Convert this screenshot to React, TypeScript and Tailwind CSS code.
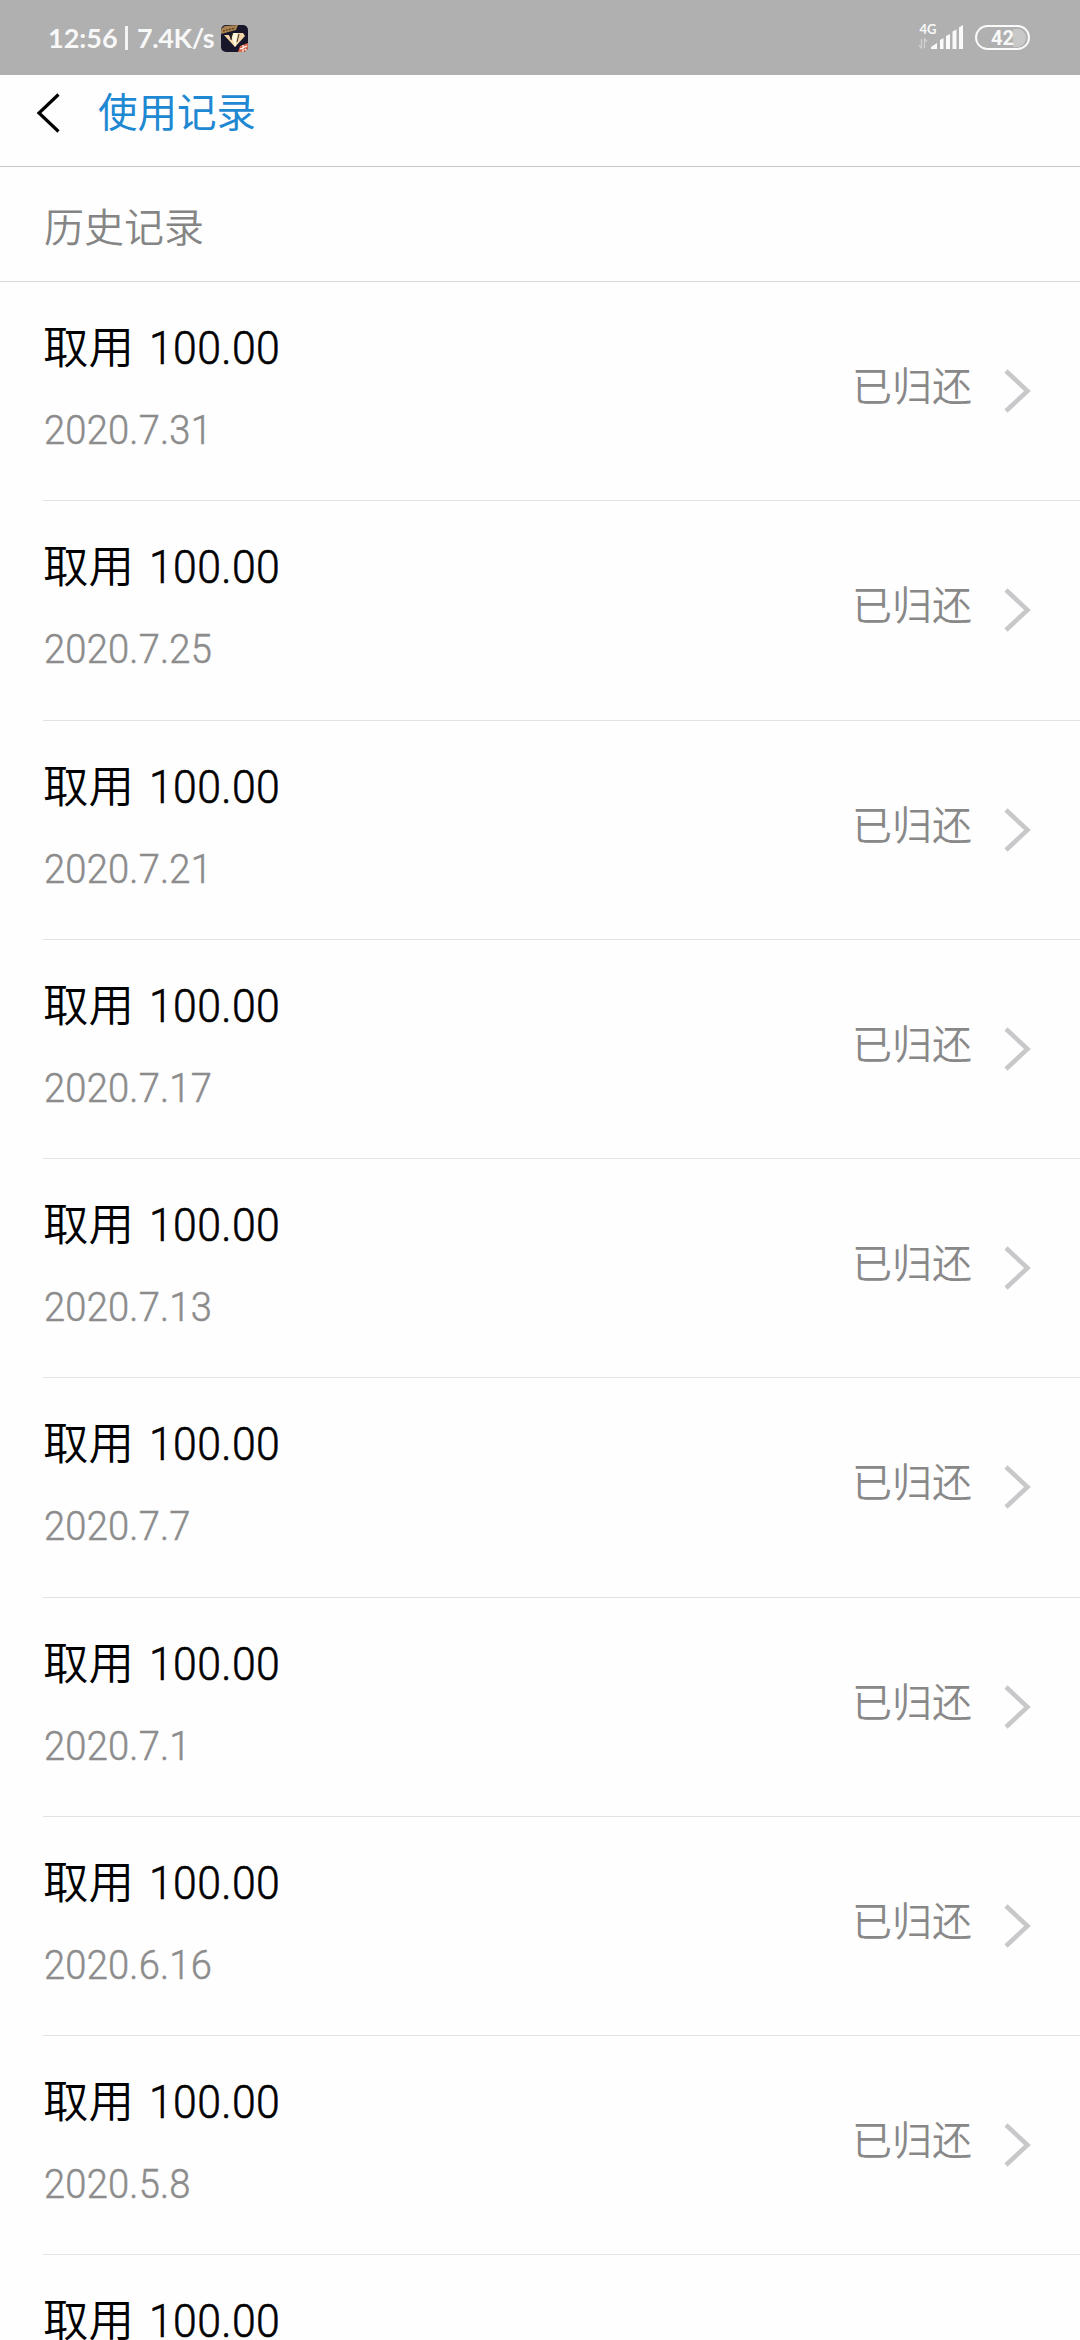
interface HistoryRecord {
  amount: string;
  date?: string;
  status?: string;
}

const RECORDS: HistoryRecord[] = [
  { amount: "100.00", date: "2020.7.31", status: "已归还" },
  { amount: "100.00", date: "2020.7.25", status: "已归还" },
  { amount: "100.00", date: "2020.7.21", status: "已归还" },
  { amount: "100.00", date: "2020.7.17", status: "已归还" },
  { amount: "100.00", date: "2020.7.13", status: "已归还" },
  { amount: "100.00", date: "2020.7.7", status: "已归还" },
  { amount: "100.00", date: "2020.7.1", status: "已归还" },
  { amount: "100.00", date: "2020.6.16", status: "已归还" },
  { amount: "100.00", date: "2020.5.8", status: "已归还" },
  { amount: "100.00" },
];

function AppBadge() {
  return (
    <svg className="ml-[9px] h-[27px] w-[27px]" viewBox="0 0 27 27">
      <clipPath id="badge">
        <rect width="27" height="27" rx="5" />
      </clipPath>
      <g clipPath="url(#badge)">
        <rect width="27" height="27" fill="#17162a" />
        <path d="M0 4L4 1L17 0L15 5L0 9Z" fill="#a9824f" />
        <path d="M2 6L14 3" stroke="#4f3925" strokeWidth="1.2" strokeDasharray="2 1" />
        <path d="M3 10H8L10 15L12 8H18L22 8L24 11L14 22Z" fill="#f3d6a8" />
        <path d="M11 12L13 8H16L15 20L14 22Z" fill="#fffbe0" />
        <path d="M11 9L10 15M18 9L16 17" stroke="#3b2c2c" strokeWidth="1" />
        <path d="M17 27L19 21L27 18V27Z" fill="#d9694f" />
        <path d="M19 24L26 21M22 20V27M24 24L26 26" stroke="#fff" strokeWidth="1.1" />
      </g>
    </svg>
  );
}

function SignalIcon() {
  return (
    <svg className="h-[30px] w-[47px] overflow-visible" viewBox="0 0 47 30">
      <text x="2.5" y="11" fontSize="13" fontWeight="700" fontFamily="Lato, sans-serif" fill="#fafafa">
        4G
      </text>
      <path d="M4.5 16V25L2 22.5M7.5 25V16L10 18.5" fill="none" stroke="#d2d2d2" strokeWidth="1.3" />
      <g fill="#fafafa">
        <path d="M14 26V24L20 20V26Z" />
        <path d="M23 26V17L26.5 15V26Z" />
        <path d="M29 26V13L33 11V26Z" />
        <path d="M35.5 26V8.5L39.5 6.5V26Z" />
        <path d="M42 26V4.5L46 2V26Z" />
      </g>
    </svg>
  );
}

function StatusBar() {
  return (
    <div className="flex h-[75px] items-center justify-between bg-[#b0b0b0] pr-[50px] pl-[48px] text-[#f8f8f8]">
      <div className="flex items-center pt-px font-['Lato',sans-serif] text-[27px] leading-[36px] font-bold">
        <span className="w-[69px] whitespace-nowrap">12:56</span>
        <span className="mr-[9px] ml-[8px] h-[24px] w-[3px] bg-[#f4f4f4]" />
        <span className="w-[75px] tracking-[-0.4px] whitespace-nowrap">7.4K/s</span>
        <AppBadge />
      </div>
      <div className="flex items-center">
        <SignalIcon />
        <div className="ml-[11px] flex h-[25px] w-[55px] items-center justify-center rounded-full border-2 border-[#fafafa] bg-linear-to-r from-[#b0b0b0] from-70% to-[#c8c8c8] to-70% bg-clip-content p-[2px] pb-[1px] font-['Roboto',sans-serif] text-[20px] leading-[21px] font-bold">
          42
        </div>
      </div>
    </div>
  );
}

function RecordRow({ record }: { record: HistoryRecord }) {
  return (
    <li className="ml-[43px] h-[219.25px] border-b border-[#e2e2e2]">
      <div className="flex justify-between pr-[49px]">
        <div className="pt-[32px]">
          <div className="flex items-start text-black">
            <span className="text-[45.5px] leading-[60px] font-[350]">取用</span>
            <span className="ml-[15px] origin-left scale-x-[0.93] pt-[4px] font-['Roboto',sans-serif] text-[46px] leading-[60px] font-light tracking-[0.4px] [-webkit-text-stroke:0.6px]">
              {record.amount}
            </span>
          </div>
          {record.date && (
            <div className="mt-[28px] ml-px origin-left scale-x-[0.93] font-['Roboto',sans-serif] text-[41px] leading-[48px] font-light tracking-[0.2px] text-[#8c8c8c] [-webkit-text-stroke:0.5px]">
              {record.date}
            </div>
          )}
        </div>
        {record.status && (
          <div className="flex pt-[78px]">
            <span className="text-[40px] leading-[48px] font-[350] text-[#888]">{record.status}</span>
            <svg className="mt-[9px] ml-[32px] h-[44px] w-[27px]" viewBox="0 0 27 44" fill="none">
              <path d="M2 2L23.5 22L2 42" stroke="#c8c8ca" strokeWidth="4.5" />
            </svg>
          </div>
        )}
      </div>
    </li>
  );
}

export default function App() {
  return (
    <div className="h-[2340px] w-[1080px] overflow-hidden bg-[#fefefe] font-['Noto_Sans_CJK_SC',sans-serif]">
      <StatusBar />
      <header className="flex h-[92px] items-start border-b border-[#c6c6c6] pl-[36px]">
        <svg className="mt-[18px] h-[40px] w-[25px]" viewBox="0 0 25 40" fill="none">
          <path d="M22.5 1.5L3 20L22.5 38.5" stroke="#000" strokeWidth="3.2" />
        </svg>
        <h1 className="ml-[37px] pt-[7px] text-[39.5px] leading-[56px] text-[#1f88d2]">使用记录</h1>
      </header>
      <h2 className="h-[115px] border-b border-[#d8d8d8] pt-[30px] pl-[44px] text-[40px] leading-[56px] font-[350] text-[#858585]">
        历史记录
      </h2>
      <ul>
        {RECORDS.map((record, index) => (
          <RecordRow key={index} record={record} />
        ))}
      </ul>
    </div>
  );
}
